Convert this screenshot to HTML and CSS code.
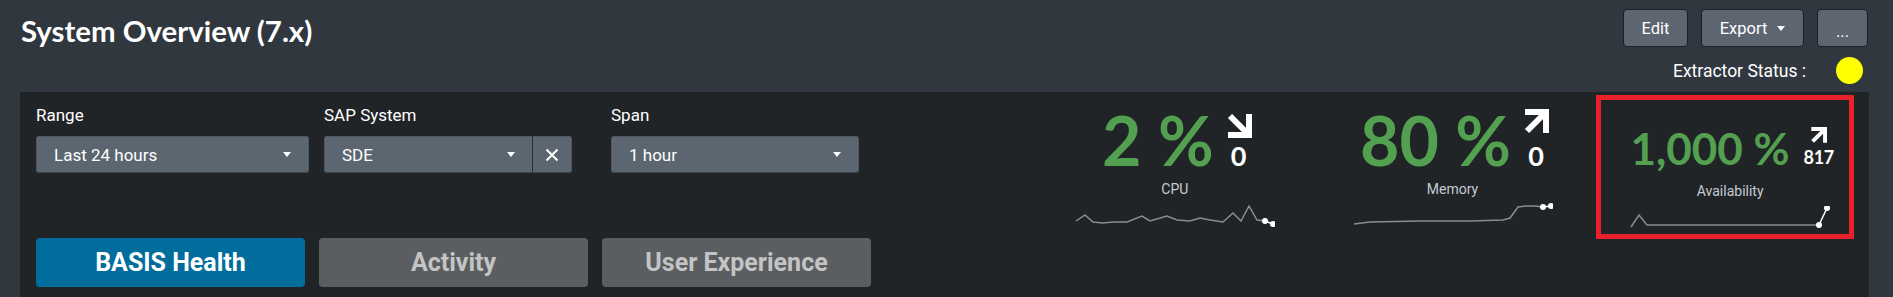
FILE: index.html
```html
<!DOCTYPE html>
<html>
<head>
<meta charset="utf-8">
<link rel="stylesheet" href="styles.css">
</head>
<body>
<header class="header">
  <h1 class="title">System Overview (7.x)</h1>
  <div class="actions">
    <div class="btn-row">
      <button class="btn btn-edit">Edit</button>
      <button class="btn btn-export">Export <span class="caret"></span></button>
      <button class="btn btn-more">...</button>
    </div>
    <div class="status-row">
      <span class="status-label">Extractor Status :</span>
      <span class="status-dot"></span>
    </div>
  </div>
</header>
<main class="panel">
  <section class="controls">
    <div class="filters">
      <div class="field field-range">
        <label class="field-label">Range</label>
        <div class="select"><span>Last 24 hours</span><span class="caret"></span></div>
      </div>
      <div class="field field-sap">
        <label class="field-label">SAP System</label>
        <div class="select-group">
          <div class="select select-joined"><span>SDE</span><span class="caret"></span></div>
          <div class="clear-btn">
            <svg width="14" height="14" viewBox="0 0 14 14"><path d="M1.5 1.5 L12.5 12.5 M12.5 1.5 L1.5 12.5" stroke="#fff" stroke-width="2" fill="none"/></svg>
          </div>
        </div>
      </div>
      <div class="field field-span">
        <label class="field-label">Span</label>
        <div class="select"><span>1 hour</span><span class="caret"></span></div>
      </div>
    </div>
    <nav class="tabs">
      <div class="tab tab-active">BASIS Health</div>
      <div class="tab">Activity</div>
      <div class="tab">User Experience</div>
    </nav>
  </section>
  <section class="kpis">
    <div class="kpi">
      <div class="kpi-main">
        <span class="kpi-value">2&nbsp;%</span>
        <span class="trend">
          <svg class="arrow" width="26" height="26" viewBox="0 0 26 26"><path d="M4 4 L21 21" stroke="#fff" stroke-width="6" fill="none"/><path d="M23 2 L23 23 L2 23" stroke="#fff" stroke-width="6" fill="none" stroke-linejoin="miter"/></svg>
          <span class="trend-val">0</span>
        </span>
      </div>
      <div class="kpi-label">CPU</div>
      <svg class="spark" width="200" height="24" viewBox="0 0 200 24">
        <polyline points="1,18 10,12 18,19 28,20 38,19 52,19 67,13 75,18 92,13 102,17 115,18 125,15 135,17 148,19 158,10 166,18 174,3 182,17 190,18" fill="none" stroke="#8c8c8c" stroke-width="1.5"/>
        <polyline points="190,18 198,21" fill="none" stroke="#fff" stroke-width="1.5"/>
        <circle cx="190" cy="18" r="3" fill="#fff"/><circle cx="198" cy="21" r="3" fill="#fff"/>
      </svg>
    </div>
    <div class="kpi">
      <div class="kpi-main">
        <span class="kpi-value">80&nbsp;%</span>
        <span class="trend trend-up">
          <svg class="arrow" width="26" height="26" viewBox="0 0 26 26"><path d="M4 22 L21 5" stroke="#fff" stroke-width="6" fill="none"/><path d="M2 3 L23 3 L23 24" stroke="#fff" stroke-width="6" fill="none" stroke-linejoin="miter"/></svg>
          <span class="trend-val">0</span>
        </span>
      </div>
      <div class="kpi-label">Memory</div>
      <svg class="spark" width="200" height="24" viewBox="0 0 200 24">
        <polyline points="1,21 17,19 67,18 117,18 150,17 157,15 165,4 174,3 182,3 190,4" fill="none" stroke="#8c8c8c" stroke-width="1.5"/>
        <polyline points="190,4 198,3" fill="none" stroke="#fff" stroke-width="1.5"/>
        <circle cx="190" cy="4" r="3" fill="#fff"/><circle cx="198" cy="3" r="3" fill="#fff"/>
      </svg>
    </div>
    <div class="kpi kpi-small">
      <div class="highlight"></div>
      <div class="kpi-main">
        <span class="kpi-value">1,000&nbsp;%</span>
        <span class="trend">
          <svg class="arrow" width="17" height="17" viewBox="0 0 26 26"><path d="M4 22 L21 5" stroke="#fff" stroke-width="6" fill="none"/><path d="M2 3 L23 3 L23 24" stroke="#fff" stroke-width="6" fill="none" stroke-linejoin="miter"/></svg>
          <span class="trend-val">817</span>
        </span>
      </div>
      <div class="kpi-label">Availability</div>
      <svg class="spark" width="200" height="24" viewBox="0 0 200 24">
        <polyline points="1,21 9,9 17,19 189,19" fill="none" stroke="#8c8c8c" stroke-width="1.5"/>
        <polyline points="189,19 197,2" fill="none" stroke="#fff" stroke-width="1.5"/>
        <circle cx="189" cy="19" r="3" fill="#fff"/><circle cx="197" cy="2" r="3" fill="#fff"/>
      </svg>
    </div>
  </section>
</main>
</body>
</html>
```

FILE: styles.css
```css
* { box-sizing: border-box; }
html, body { margin: 0; padding: 0; }
body {
  background: #31373e;
  font-family: Roboto, "Liberation Sans", sans-serif;
  color: #fff;
  width: 1893px;
  height: 297px;
  overflow: hidden;
}
.header {
  display: flex;
  justify-content: space-between;
  align-items: flex-start;
  height: 92px;
  padding: 9px 25px 0 21px;
}
.title {
  margin: 7px 0 0 0;
  font-family: Lato, "Open Sans", sans-serif;
  font-weight: 700;
  font-size: 29.4px;
  line-height: 30px;
  color: #fff;
}
.actions {
  display: flex;
  flex-direction: column;
  align-items: flex-end;
}
.btn-row {
  display: flex;
  gap: 13px;
}
.btn {
  height: 38px;
  background: #5c6570;
  border: 1px solid #1c1f23;
  border-radius: 4px;
  color: #fff;
  font-family: Roboto, sans-serif;
  font-size: 16.5px;
  padding: 0;
  display: flex;
  align-items: center;
  justify-content: center;
}
.btn-edit { width: 65px; }
.btn-export { width: 103px; gap: 10px; }
.btn-more { width: 51px; padding-top: 6px; }
.caret {
  display: inline-block;
  width: 0;
  height: 0;
  border-left: 4.5px solid transparent;
  border-right: 4.5px solid transparent;
  border-top: 5px solid #fff;
}
.status-row {
  display: flex;
  align-items: center;
  margin-top: 10px;
  height: 27px;
}
.status-label {
  font-size: 17.5px;
  color: #fff;
  margin-right: 30px;
}
.status-dot {
  width: 27px;
  height: 27px;
  border-radius: 50%;
  background: #ffff00;
  margin-right: 5px;
}
.panel {
  display: flex;
  margin: 0 24px 0 20px;
  height: 205px;
  background: #212427;
}
.controls {
  width: 1016px;
  padding: 13px 0 0 16px;
}
.filters {
  display: flex;
}
.field-label {
  display: block;
  font-size: 17px;
  line-height: 20px;
  color: #fff;
  margin-bottom: 11px;
}
.field-range { width: 273px; margin-right: 15px; }
.field-sap { width: 248px; margin-right: 39px; }
.field-span { width: 248px; }
.select {
  height: 37px;
  background: #5c6670;
  border: 1px solid #4f5861;
  border-bottom-color: #3f464d;
  border-radius: 3px;
  display: flex;
  align-items: center;
  justify-content: space-between;
  padding: 0 17px 0 17px;
  font-size: 17px;
  color: #fff;
}
.select-group {
  display: flex;
}
.select-joined {
  flex: 1;
  border-radius: 3px 0 0 3px;
  border-right: 1px solid #2a2e33;
}
.clear-btn {
  width: 39px;
  height: 37px;
  background: #5c6670;
  border: 1px solid #4f5861;
  border-left: none;
  border-bottom-color: #3f464d;
  border-radius: 0 3px 3px 0;
  display: flex;
  align-items: center;
  justify-content: center;
}
.tabs {
  display: flex;
  gap: 14px;
  margin: 65px 0 0 0;
}
.tab {
  width: 269px;
  height: 49px;
  border-radius: 4px;
  background: #5b5e60;
  color: #c4c4c4;
  font-size: 25px;
  font-weight: 700;
  display: flex;
  align-items: center;
  justify-content: center;
}
.tab-active {
  background: #006d9c;
  color: #fff;
}
.kpis {
  flex: 1;
  display: flex;
}
.kpi {
  flex: 1;
  position: relative;
  display: flex;
  flex-direction: column;
  align-items: center;
  padding-top: 14px;
}
.kpi-main {
  display: flex;
  align-items: flex-end;
  gap: 12px;
  padding-left: 4px;
}
.kpi-value {
  font-family: Lato, "Open Sans", sans-serif;
  font-weight: 700;
  font-size: 68px;
  line-height: 68px;
  color: #53a051;
}
.trend {
  display: flex;
  flex-direction: column;
  align-items: center;
  padding-bottom: 6px;
}
.trend-up .arrow { margin-bottom: 3px; }
.trend-val {
  font-family: Lato, "Open Sans", sans-serif;
  font-weight: 700;
  font-size: 27px;
  line-height: 24px;
  color: #fff;
  margin-top: 6px;
}
.kpi-label {
  font-size: 14px;
  line-height: 16px;
  color: #c3cbd4;
  margin-top: 7px;
}
.spark {
  display: block;
  margin-top: 6px;
}
.kpi-small .kpi-main { padding-top: 20px; gap: 14px; }
.kpi-small .kpi-value { font-size: 44px; line-height: 44px; }
.kpi-small .trend-val { font-size: 18px; line-height: 18px; margin-top: 4px; letter-spacing: -0.3px; }
.kpi-small .trend { padding-bottom: 4px; }
.kpi-small .kpi-label { margin-top: 13px; }
.kpi-small .spark { margin-top: 7px; }
.highlight {
  position: absolute;
  left: 5px;
  right: 15px;
  top: 3px;
  height: 144px;
  border: 5px solid #e8212b;
}
```
